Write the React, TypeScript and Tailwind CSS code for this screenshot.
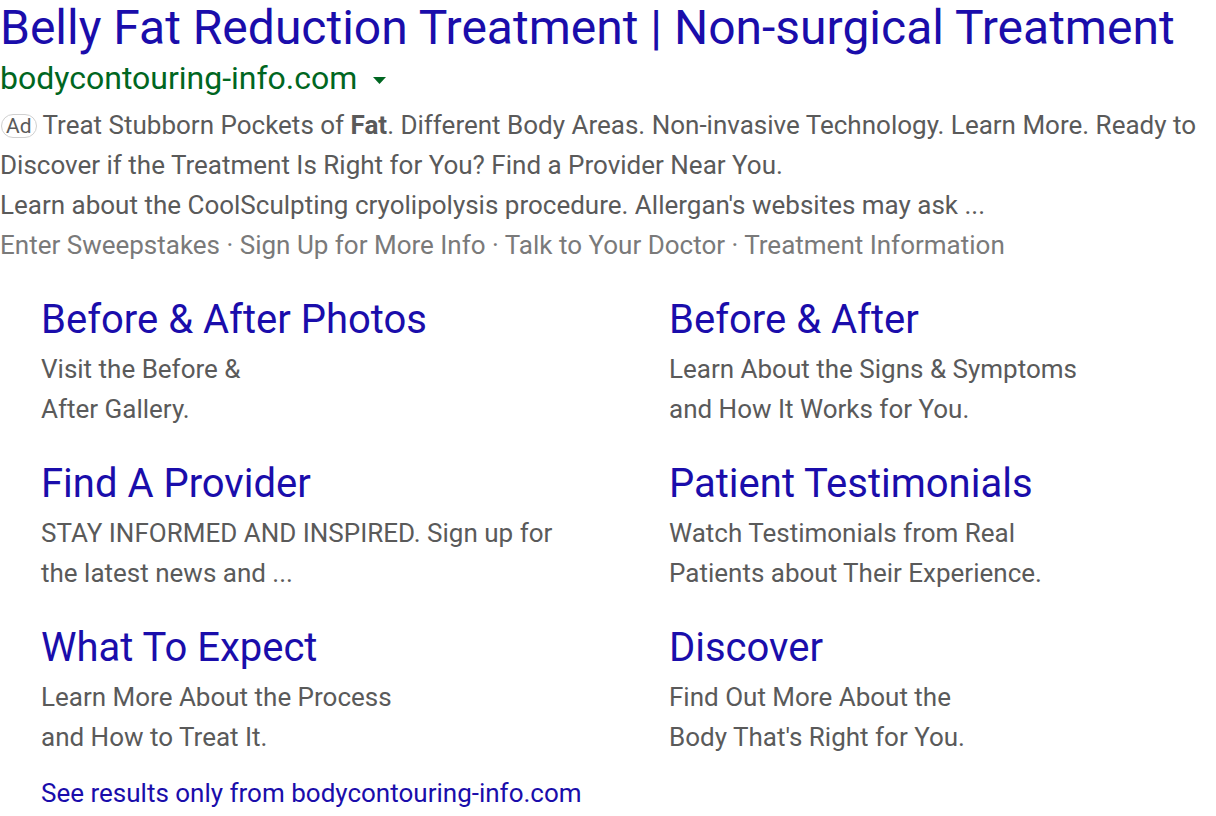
export default function App() {
  const sitelinks = [
    { title: "Before & After Photos", lines: ["Visit the Before &", "After Gallery."] },
    { title: "Before & After", lines: ["Learn About the Signs & Symptoms", "and How It Works for You."] },
    { title: "Find A Provider", lines: ["STAY INFORMED AND INSPIRED. Sign up for", "the latest news and ..."] },
    { title: "Patient Testimonials", lines: ["Watch Testimonials from Real", "Patients about Their Experience."] },
    { title: "What To Expect", lines: ["Learn More About the Process", "and How to Treat It."] },
    { title: "Discover", lines: ["Find Out More About the", "Body That's Right for You."] },
  ];

  return (
    <div className="min-h-screen bg-white font-['Roboto',sans-serif]">
      <h3 className="whitespace-nowrap text-[48px] leading-[56px] text-[#1a0dab]">
        Belly Fat Reduction Treatment | Non-surgical Treatment
      </h3>
      <div className="flex h-[44px] items-center gap-[16px] text-[32px] text-[#006621]">
        <span>bodycontouring-info.com</span>
        <svg width="13" height="7" viewBox="0 0 13 7" className="mt-[4px]">
          <path d="M0 0h13L6.5 7z" fill="#006621" />
        </svg>
      </div>
      <div className="mt-[5px] text-[26px] leading-[40px] text-[#5a5a5a]">
        <div className="whitespace-nowrap">
          <span className="mr-[6px] ml-[1px] inline-block rounded-[12px] border border-[#d0d0d0] px-[4px] align-[1px] text-[21px] leading-[22px] text-[#5a5a5a]">
            Ad
          </span>
          Treat Stubborn Pockets of <b className="font-bold">Fat</b>. Different Body Areas. Non-invasive Technology. Learn More. Ready to
        </div>
        <div className="whitespace-nowrap">Discover if the Treatment Is Right for You? Find a Provider Near You.</div>
        <div className="whitespace-nowrap">Learn about the CoolSculpting cryolipolysis procedure. Allergan's websites may ask ...</div>
        <div className="whitespace-nowrap text-[#7a7a7a]">
          Enter Sweepstakes · Sign Up for More Info · Talk to Your Doctor · Treatment Information
        </div>
      </div>
      <div className="mt-[31px] grid grid-cols-[628px_1fr] gap-y-[31px] pl-[41px]">
        {sitelinks.map((s) => (
          <div key={s.title}>
            <div className="whitespace-nowrap text-[40px] leading-[48px] text-[#1a0dab]">{s.title}</div>
            <div className="mt-[5px] text-[26px] leading-[40px] text-[#5a5a5a]">
              {s.lines.map((l) => (
                <div key={l} className="whitespace-nowrap">{l}</div>
              ))}
            </div>
          </div>
        ))}
      </div>
      <div className="mt-[16px] pl-[41px] text-[26px] leading-[40px] text-[#1a0dab]">
        See results only from bodycontouring-info.com
      </div>
    </div>
  );
}
